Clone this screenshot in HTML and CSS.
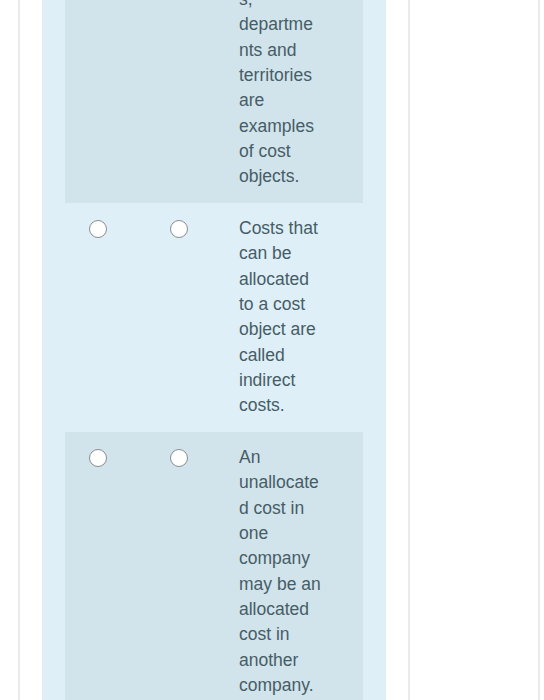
FILE: index.html
```html
<!DOCTYPE html>
<html>
<head>
<meta charset="utf-8">
<link rel="stylesheet" href="styles.css">
</head>
<body>
<div class="page">
  <div class="card">
    <div class="panel">
      <div class="row shaded">
        <span class="radio"></span>
        <span class="radio"></span>
        <div class="stmt">Products, services, customer<wbr>s, departments and territories are examples of cost objects.</div>
      </div>
      <div class="row">
        <span class="radio"></span>
        <span class="radio"></span>
        <div class="stmt">Costs that can be allocated to a cost object are called indirect costs.</div>
      </div>
      <div class="row shaded">
        <span class="radio"></span>
        <span class="radio"></span>
        <div class="stmt">An unallocated cost in one company may be an allocated cost in another company.</div>
      </div>
    </div>
  </div>
  <div class="side"></div>
</div>
</body>
</html>
```

FILE: styles.css
```css
html, body {
  margin: 0;
  padding: 0;
  background: #ffffff;
  overflow: hidden;
  height: 700px;
}

.page {
  display: flex;
  align-items: stretch;
  height: 700px;
  padding-left: 18px;
}

.card {
  width: 344px;
  padding: 0 22px;
  border-left: 2px solid #ebebeb;
  border-right: 2px solid #ebebeb;
  flex: none;
}

.panel {
  background: #deeff7;
  padding: 0 23px;
  margin-top: -102px;
  height: 840px;
}

.row {
  display: grid;
  grid-template-columns: 24px 18px 63px 18px 51px 82.5px;
  grid-template-areas: ". a . b . t";
  padding: 13.3px 0;
  align-items: start;
}

.row.shaded {
  background: #d1e3eb;
}

.radio {
  width: 18px;
  height: 18px;
  box-sizing: border-box;
  border: 1.5px solid #8a8d8f;
  border-radius: 50%;
  background: #ffffff;
  margin-top: 3.6px;
}

.row .radio:nth-child(1) { grid-area: a; }
.row .radio:nth-child(2) { grid-area: b; }

.stmt {
  grid-area: t;
  width: 82.5px;
  font-family: "Liberation Sans", Arial, sans-serif;
  font-size: 17.5px;
  line-height: 25.3px;
  color: #475d66;
  overflow-wrap: break-word;
}

.side {
  width: 128px;
  border-right: 2px solid #ebebeb;
  flex: none;
}
```
